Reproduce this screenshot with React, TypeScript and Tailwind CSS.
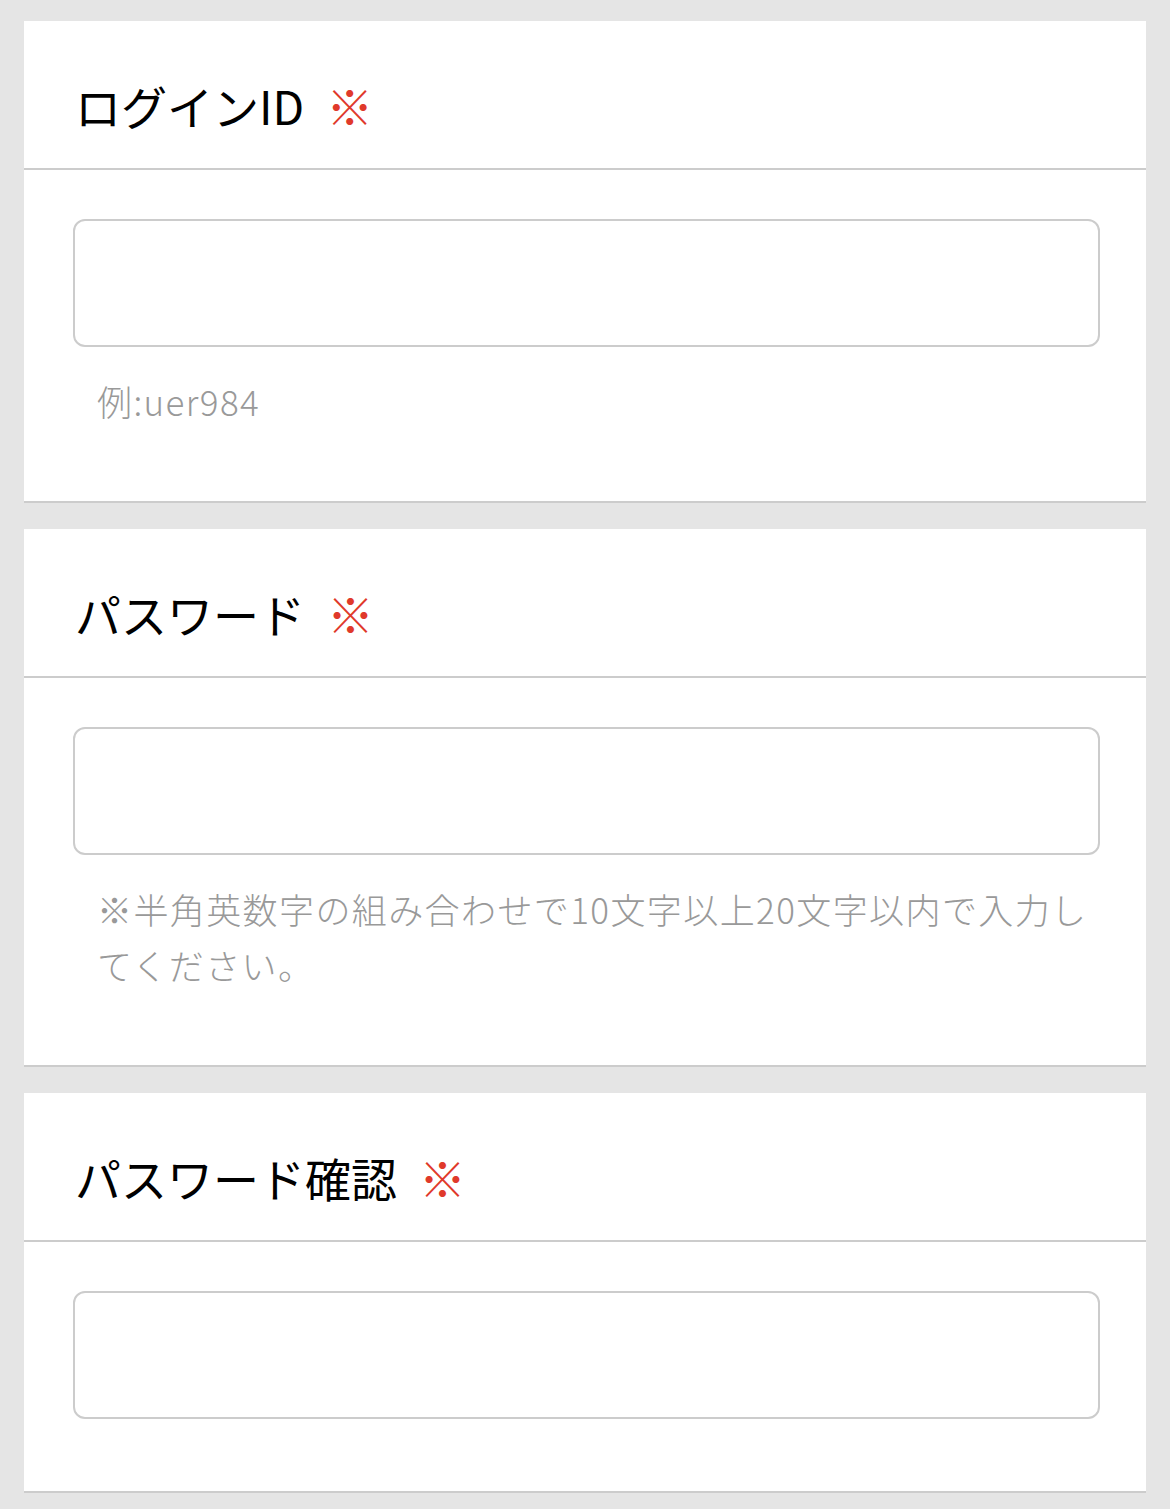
const fields = [
  { label: "ログインID", hint: "例:uer984" },
  {
    label: "パスワード",
    hint: "※半角英数字の組み合わせで10文字以上20文字以内で入力してください。",
  },
  { label: "パスワード確認", hint: "" },
];

function Field({ label, hint }: { label: string; hint: string }) {
  return (
    <section className="bg-white border-b-2 border-[#cccccc]">
      <div className="h-[149px] flex items-center pt-[20px] pl-[51px] border-b-2 border-[#cccccc]">
        <h2 className="text-[46px] leading-none text-black font-normal">
          {label}
        </h2>
        <span className="ml-[22px] text-[47px] leading-none text-[#e0392b]">
          ※
        </span>
      </div>
      <div className="pt-[49px] pb-[72px] pl-[49px] pr-[46px]">
        <input
          type="text"
          className="block w-full h-[128px] border-2 border-[#cccccc] rounded-[12px] bg-white outline-none"
        />
        {hint && (
          <p className="mt-[26px] pl-[24px] pr-[8px] text-[35px] tracking-[1.4px] leading-[56px] font-light text-[#999999]">
            {hint}
          </p>
        )}
      </div>
    </section>
  );
}

export default function App() {
  return (
    <div
      className="min-h-[1509px] bg-[#e5e5e5] pt-[21px] px-[24px] flex flex-col gap-[26px]"
      style={{ fontFamily: '"Noto Sans CJK JP", "Noto Sans", sans-serif' }}
    >
      {fields.map((f) => (
        <Field key={f.label} label={f.label} hint={f.hint} />
      ))}
    </div>
  );
}
